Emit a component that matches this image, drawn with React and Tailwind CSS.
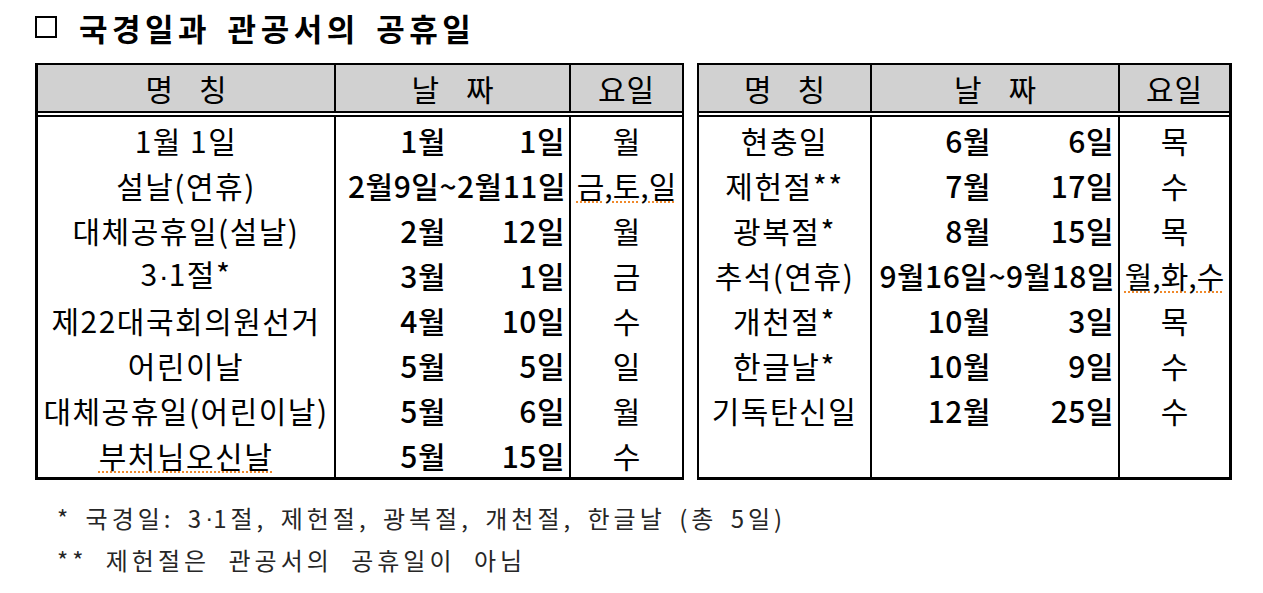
import React from 'react'

const KR = { fontFamily: '"Noto Sans CJK KR", "Noto Sans", sans-serif' }

// proportional middle dot (the CJK one is full width)
const Dot = () => (
  <span className="tracking-normal" style={{ fontFamily: '"Liberation Sans", sans-serif' }}>·</span>
)

const LEFT = [
  { name: '1월 1일', m: '1월', d: '1일', w: '월' },
  { name: '설날(연휴)', range: '2월9일~2월11일', w: '금,토,일', wavy: true },
  { name: '대체공휴일(설날)', m: '2월', d: '12일', w: '월' },
  { name: <>3<Dot />1절*</>, m: '3월', d: '1일', w: '금' },
  { name: '제22대국회의원선거', m: '4월', d: '10일', w: '수' },
  { name: '어린이날', m: '5월', d: '5일', w: '일' },
  { name: '대체공휴일(어린이날)', m: '5월', d: '6일', w: '월' },
  { name: '부처님오신날', m: '5월', d: '15일', w: '수', nameWavy: true },
]

const RIGHT = [
  { name: '현충일', m: '6월', d: '6일', w: '목' },
  { name: '제헌절**', m: '7월', d: '17일', w: '수' },
  { name: '광복절*', m: '8월', d: '15일', w: '목' },
  { name: '추석(연휴)', range: '9월16일~9월18일', w: '월,화,수', wavy: true },
  { name: '개천절*', m: '10월', d: '3일', w: '목' },
  { name: '한글날*', m: '10월', d: '9일', w: '수' },
  { name: '기독탄신일', m: '12월', d: '25일', w: '수' },
  { name: '', m: '', d: '', w: '' },
]

const wavyCls = 'underline decoration-dotted decoration-[#f0892a] decoration-2 underline-offset-[4px]'

function HolidayTable({ rows, cols, monthW, outer }) {
  return (
    <div className={`border-black ${outer} flex flex-col`}>
      {/* header */}
      <div
        className="grid h-[48px] bg-[#d1d1d1] border-b-2 border-black text-[30px] text-black"
        style={{ gridTemplateColumns: cols }}
      >
        <div className="flex items-center justify-center gap-[26px] border-r-2 border-black">
          <span>명</span><span>칭</span>
        </div>
        <div className="flex items-center justify-center gap-[27px] border-r-2 border-black">
          <span>날</span><span>짜</span>
        </div>
        <div className="flex items-center justify-center tracking-[1px]">요일</div>
      </div>
      <div className="h-[2px] bg-white" />
      <div className="border-t-2 border-black">
        {rows.map((r, i) => (
          <div key={i} className="grid h-[45px] text-[30px] leading-none text-black" style={{ gridTemplateColumns: cols }}>
            <div className="flex items-center justify-center border-r-2 border-black whitespace-nowrap tracking-[1.5px]">
              <span className={r.nameWavy ? wavyCls : ''}>{r.name}</span>
            </div>
            <div className="flex items-center border-r-2 border-black font-medium whitespace-nowrap tracking-[0.5px]">
              {r.range ? (
                <span className="w-full text-right pr-[3px]">{r.range}</span>
              ) : (
                <>
                  <span className="text-right" style={{ width: monthW }}>{r.m}</span>
                  <span className="flex-1 text-right pr-[4px]">{r.d}</span>
                </>
              )}
            </div>
            <div className="flex items-center justify-center whitespace-nowrap">
              <span className={r.wavy ? wavyCls : ''}>{r.w}</span>
            </div>
          </div>
        ))}
      </div>
    </div>
  )
}

export default function App() {
  return (
    <div className="w-[1263px] h-[593px] bg-white overflow-hidden" style={KR}>
      <div className="flex items-center h-[30px] mt-[12px] pl-[35px]">
        <span className="w-[22px] h-[22px] border-2 border-black" />
        <span className="ml-[22px] text-[31px] font-bold tracking-[4.5px] [word-spacing:5px] text-black leading-none">
          국경일과 관공서의 공휴일
        </span>
      </div>

      <div className="flex gap-[13px] pl-[35px] mt-[21px]">
        <HolidayTable
          rows={LEFT}
          cols="298px 235px 111px"
          monthW="110px"
          outer="border-l-[3px] border-t-2 border-r-2 border-b-[3px]"
        />
        <HolidayTable
          rows={RIGHT}
          cols="173px 248px 109px"
          monthW="119px"
          outer="border-l-2 border-t-2 border-r-[3px] border-b-[3px]"
        />
      </div>

      <div className="pl-[57px] mt-[18px] text-[24px] text-[#262626] tracking-[4px]">
        <p className="h-[40px] flex items-center whitespace-pre [word-spacing:4px]">* 국경일: 3<Dot />1절, 제헌절, 광복절, 개천절, 한글날 (총 5일)</p>
        <p className="h-[40px] flex items-center mt-[2px] whitespace-pre [word-spacing:9px]">** 제헌절은 관공서의 공휴일이 아님</p>
      </div>
    </div>
  )
}
